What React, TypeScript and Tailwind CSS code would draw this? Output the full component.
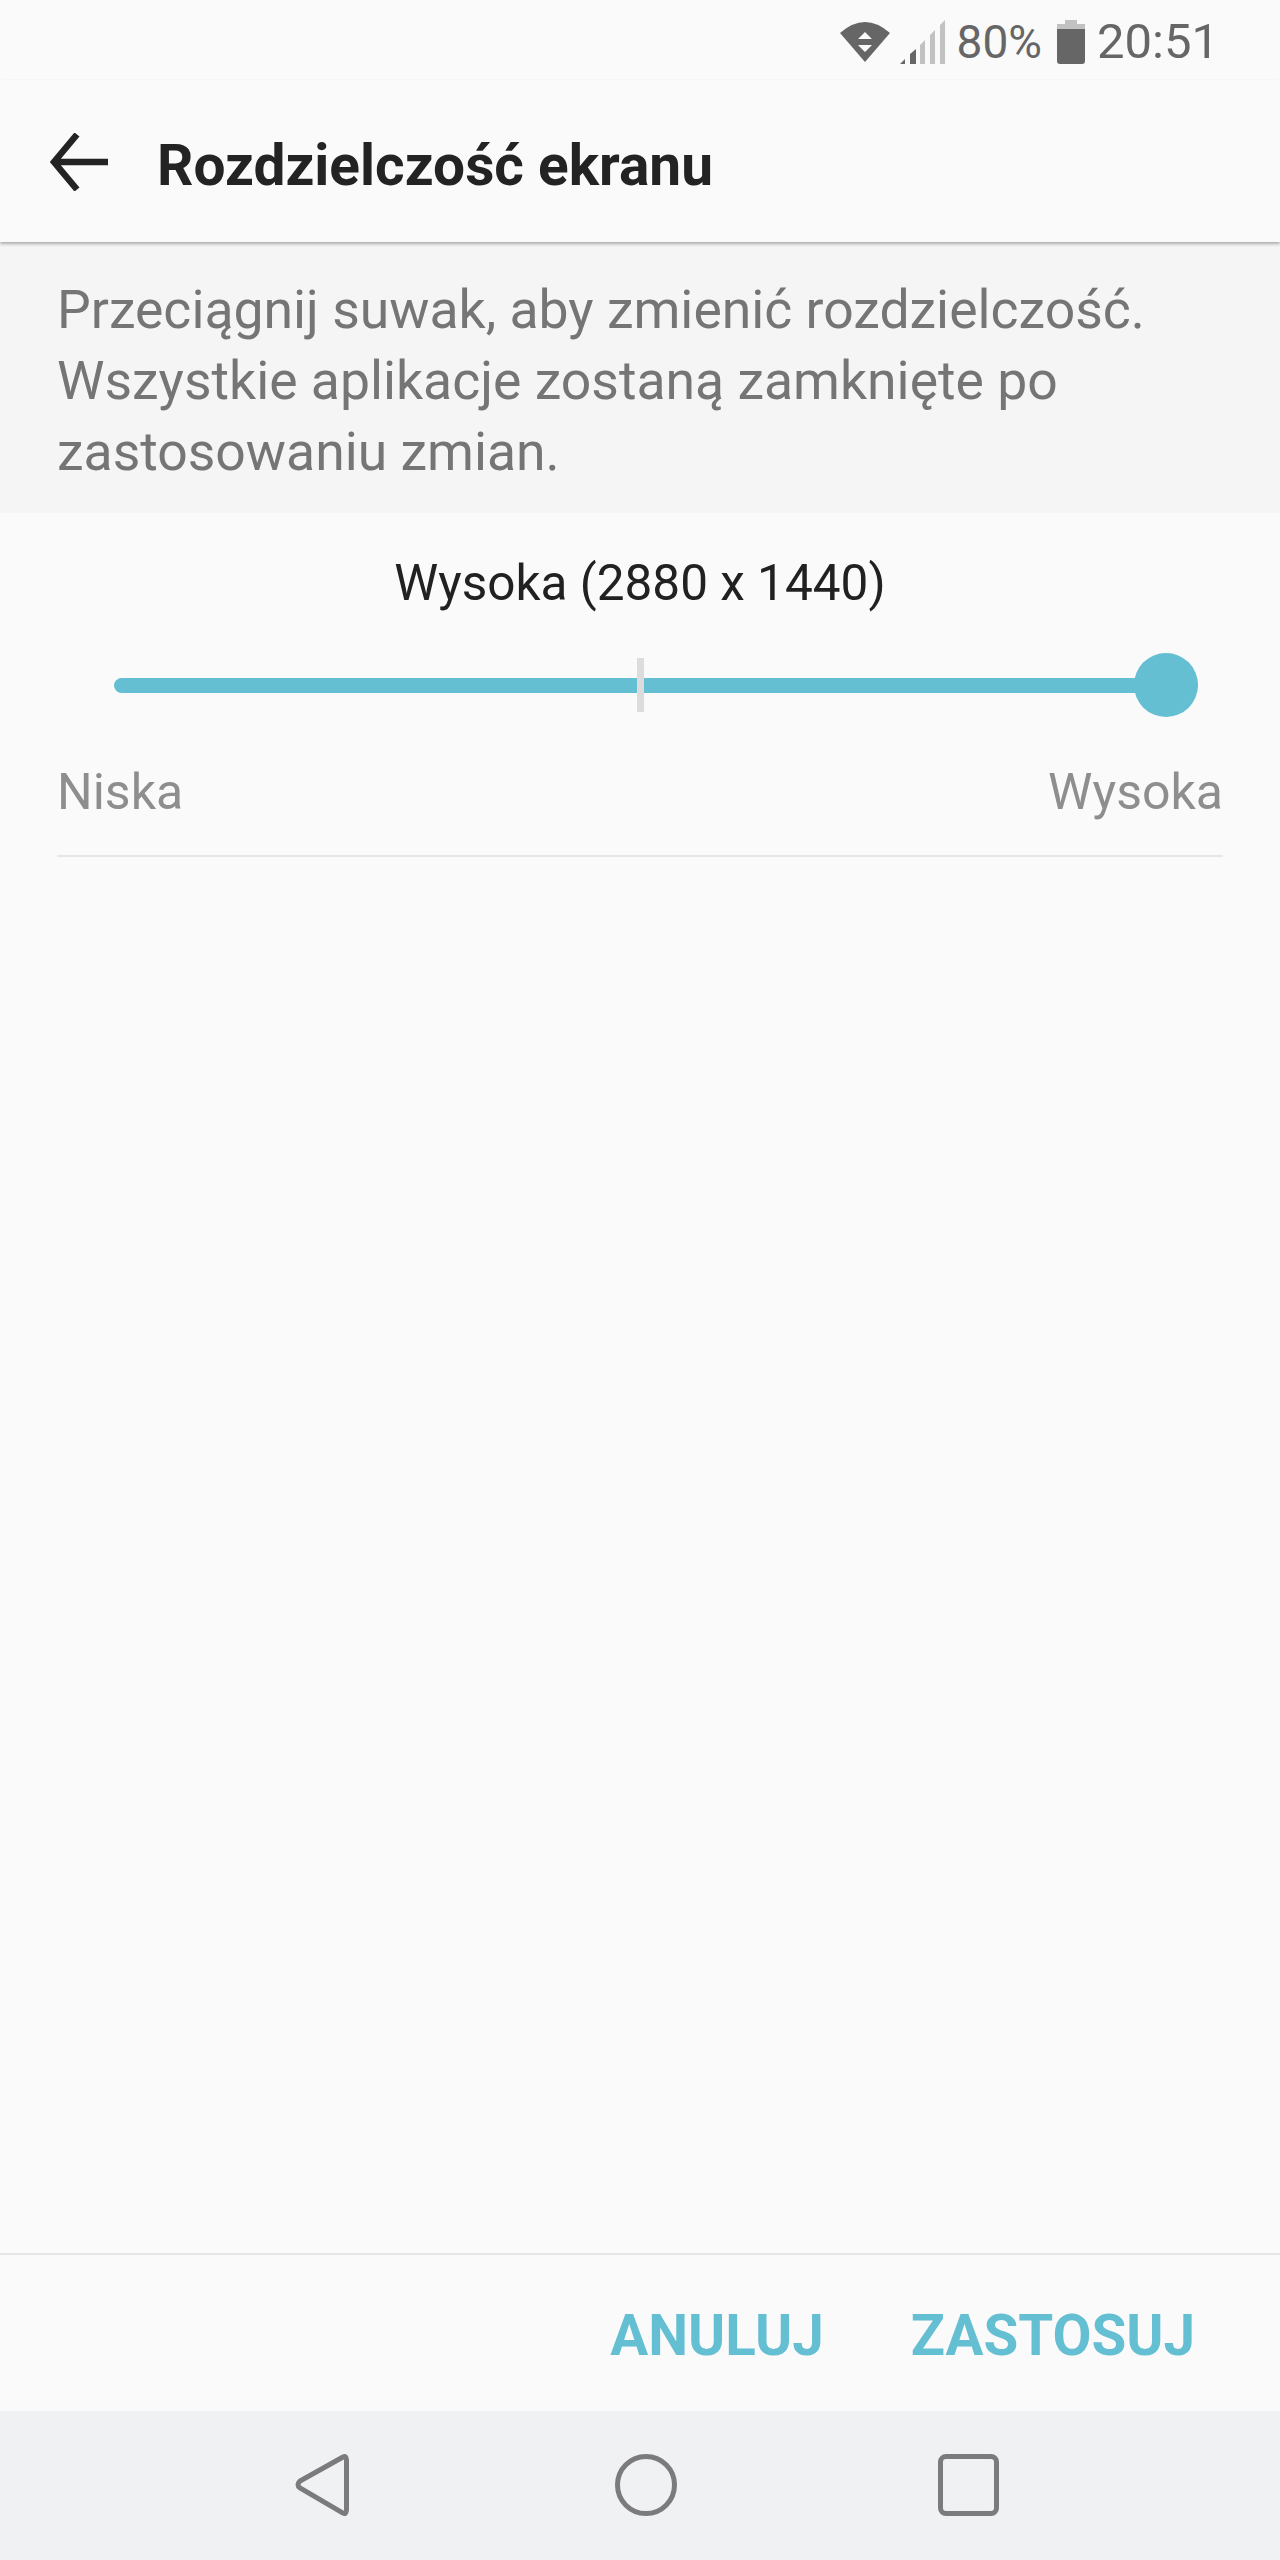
import React from 'react';

const font = { fontFamily: 'Roboto, "Liberation Sans", sans-serif' };

const StatusBar = () => (
  <div className="h-[80px] flex items-start justify-end pr-[61px] text-[#666666]">
    <svg width="50" height="40" viewBox="0 0 50 40" className="mt-[22px]">
      <path d="M0 11 Q25 -11 50 11 L25 40 Z" fill="#666666" />
      <path d="M25 10 L32 17 L18 17 Z M25 30 L32 23 L18 23 Z" fill="#fafafa" />
    </svg>
    <svg width="46" height="44" viewBox="0 0 46 44" className="mt-[20px] ml-[10px]">
      <path d="M0 44 L5 39 V44 Z M10 34 L16 29 V44 H10 Z" fill="#666666" />
      <path d="M20 25 L25 20 V44 H20 Z M30 15 L35 10 V44 H30 Z M40 5 L45 0 V44 H40 Z" fill="#c2c2c2" />
    </svg>
    <span className="text-[46px] leading-[46px] mt-[19px] ml-[11px]">80%</span>
    <svg width="29" height="44" viewBox="0 0 29 44" className="mt-[20px] ml-[15px]">
      <path d="M8 0 H20 V4 H28 V9 H0 V4 H8 Z" fill="#c2c2c2" />
      <path d="M0 9 H28 V41 Q28 44 25 44 H3 Q0 44 0 41 Z" fill="#666666" />
    </svg>
    <span className="text-[49px] leading-[49px] mt-[17px] ml-[11px]">20:51</span>
  </div>
);

const Header = () => (
  <div className="relative h-[162px] flex items-start bg-[#fafafa] shadow-[0_2px_3px_rgba(0,0,0,0.3)]">
    <svg width="60" height="58" viewBox="0 0 60 58" className="ml-[50px] mt-[53px]">
      <path d="M58 29 H4 M27 1.5 L4 29 L27 56.5" fill="none" stroke="#232323" strokeWidth="6.5" />
    </svg>
    <h1 className="ml-[47px] mt-[55px] text-[56.8px] leading-[62px] font-bold text-[#232323]">
      Rozdzielczość ekranu
    </h1>
  </div>
);

const Slider = () => (
  <div className="relative h-[64px] mt-[34px] ml-[114px] mr-[82px] flex items-center">
    <div className="w-full h-[15px] rounded-full bg-[#65bfd3]" />
    <div className="absolute left-[523px] top-[5px] w-[7px] h-[54px] bg-[#dcdcdc]" />
    <div className="absolute right-0 top-0 w-[64px] h-[64px] rounded-full bg-[#65bfd3]" />
  </div>
);

const NavBar = () => (
  <div className="h-[149px] bg-[#f0f1f3] relative">
    <svg width="56" height="64" viewBox="0 0 56 64" className="absolute left-[295px] top-[42px]">
      <path d="M48 4 Q51 2 51.5 7 V57 Q51 62 48 60 L5 35 Q1 32 5 28 Z" fill="none" stroke="#7b7b7d" strokeWidth="5" />
    </svg>
    <div className="absolute left-[615px] top-[43px] w-[62px] h-[62px] rounded-full border-[5px] border-[#7b7b7d]" />
    <div className="absolute left-[938px] top-[43px] w-[61px] h-[62px] rounded-[8px] border-[5px] border-[#7b7b7d]" />
  </div>
);

export default function App() {
  return (
    <div className="w-[1280px] h-[2560px] flex flex-col bg-[#fafafa]" style={font}>
      <StatusBar />
      <Header />
      <div className="h-[271px] bg-[#f5f5f5] pl-[57px] pt-[32px] text-[53.5px] leading-[71px] text-[#757575]">
        <p>Przeciągnij suwak, aby zmienić rozdzielczość.</p>
        <p>Wszystkie aplikacje zostaną zamknięte po</p>
        <p>zastosowaniu zmian.</p>
      </div>
      <div className="flex-1 flex flex-col">
        <div className="pt-[35px] text-center text-[49.5px] leading-[71px] text-[#212121]">
          Wysoka (2880 x 1440)
        </div>
        <Slider />
        <div className="flex justify-between mx-[57px] mt-[40px] pb-[27px] text-[50px] leading-[71px] text-[#8e8e8e] border-b-2 border-[#e6e6e6]">
          <span>Niska</span>
          <span>Wysoka</span>
        </div>
      </div>
      <div className="h-[158px] pt-[6px] border-t-2 border-[#e6e6e6] flex justify-end items-center gap-[87px] pr-[85px] text-[56.5px] font-bold text-[#65bfd3]">
        <span>ANULUJ</span>
        <span>ZASTOSUJ</span>
      </div>
      <NavBar />
    </div>
  );
}
